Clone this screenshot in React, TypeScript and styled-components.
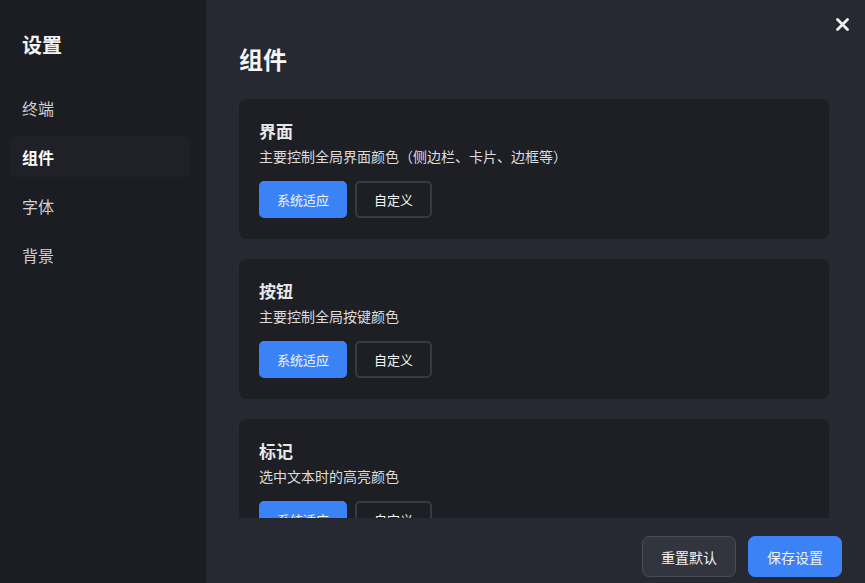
import React from "react";
import styled, { createGlobalStyle } from "styled-components";

const Global = createGlobalStyle`
  html, body { margin: 0; padding: 0; background: #262932; }
  body { font-family: "Noto Sans CJK SC", "Noto Sans", sans-serif; }
  * { box-sizing: border-box; }
`;

const Shell = styled.div`
  display: flex;
  width: 865px;
  height: 583px;
  overflow: hidden;
  position: relative;
`;

const Sidebar = styled.aside`
  width: 206px;
  flex: none;
  background: #1c1d22;
  display: flex;
  flex-direction: column;
  padding: 30px 16px 0 10px;
`;

const SideTitle = styled.h1`
  margin: 0 0 27px 12px;
  font-size: 20px;
  line-height: 30px;
  font-weight: 700;
  color: #f3f3f4;
`;

const NavList = styled.nav`
  display: flex;
  flex-direction: column;
  gap: 8px;
`;

const NavItem = styled.div<{ $active?: boolean }>`
  height: 41px;
  display: flex;
  align-items: center;
  padding-left: 12px;
  border-radius: 6px;
  font-size: 16px;
  font-weight: ${(p) => (p.$active ? 700 : 400)};
  color: ${(p) => (p.$active ? "#ffffff" : "#cfd0d4")};
  background: ${(p) => (p.$active ? "#202127" : "transparent")};
`;

const Main = styled.main`
  flex: 1;
  display: flex;
  flex-direction: column;
  background: #262932;
  min-width: 0;
`;

const Scroll = styled.div`
  flex: 1;
  overflow-y: scroll;
  padding: 39px 28px 0 33px;
  &::-webkit-scrollbar { width: 4px; }
  &::-webkit-scrollbar-track { background: #2a2d36; }
  &::-webkit-scrollbar-thumb { background: #2e313a; }
`;

const Heading = styled.h2`
  margin: 0 0 20px 0;
  font-size: 24px;
  line-height: 40px;
  font-weight: 700;
  color: #f5f5f6;
`;

const Cards = styled.div`
  display: flex;
  flex-direction: column;
  gap: 20px;
  width: 590px;
  padding-bottom: 20px;
`;

const Card = styled.section`
  background: #1e1f24;
  border-radius: 8px;
  padding: 20px;
  height: 140px;
`;

const CardTitle = styled.h3`
  margin: 0;
  font-size: 17px;
  line-height: 24px;
  font-weight: 700;
  color: #e8e8ea;
`;

const CardDesc = styled.p`
  margin: 3px 0 0 0;
  font-size: 14px;
  line-height: 20px;
  color: #dcdcdf;
`;

const BtnRow = styled.div`
  display: flex;
  gap: 8px;
  margin-top: 15px;
`;

const OptionBtn = styled.button<{ $primary?: boolean }>`
  height: 37px;
  padding: 0 ${(p) => (p.$primary ? 16 : 17)}px;
  border-radius: 5px;
  font-family: inherit;
  font-size: 13px;
  color: #f4f4f5;
  background: ${(p) => (p.$primary ? "#3b82f6" : "transparent")};
  border: 2px solid ${(p) => (p.$primary ? "#3b82f6" : "#383a42")};
  cursor: pointer;
`;

const Footer = styled.footer`
  height: 65px;
  flex: none;
  display: flex;
  justify-content: flex-end;
  gap: 12px;
  padding: 18px 23px 6px 0;
`;

const FootBtn = styled.button<{ $primary?: boolean }>`
  width: 94px;
  height: 41px;
  border-radius: 7px;
  font-family: inherit;
  font-size: 14px;
  color: #f2f2f3;
  background: ${(p) => (p.$primary ? "#3b82f6" : "#33353e")};
  border: 1px solid ${(p) => (p.$primary ? "#3b82f6" : "#4a4c55")};
  cursor: pointer;
`;

const Close = styled.button`
  position: absolute;
  top: 15px;
  right: 14px;
  width: 18px;
  height: 18px;
  padding: 0;
  border: none;
  background: transparent;
  display: flex;
  align-items: center;
  justify-content: center;
  cursor: pointer;
`;

const sections = [
  { title: "界面", desc: "主要控制全局界面颜色（侧边栏、卡片、边框等）" },
  { title: "按钮", desc: "主要控制全局按键颜色" },
  { title: "标记", desc: "选中文本时的高亮颜色" },
  { title: "链接", desc: "主要控制全局链接颜色" },
];

export default function App() {
  return (
    <>
      <Global />
      <Shell>
        <Sidebar>
          <SideTitle>设置</SideTitle>
          <NavList>
            <NavItem>终端</NavItem>
            <NavItem $active>组件</NavItem>
            <NavItem>字体</NavItem>
            <NavItem>背景</NavItem>
          </NavList>
        </Sidebar>
        <Main>
          <Scroll>
            <Heading>组件</Heading>
            <Cards>
              {sections.map((s) => (
                <Card key={s.title}>
                  <CardTitle>{s.title}</CardTitle>
                  <CardDesc>{s.desc}</CardDesc>
                  <BtnRow>
                    <OptionBtn $primary>系统适应</OptionBtn>
                    <OptionBtn>自定义</OptionBtn>
                  </BtnRow>
                </Card>
              ))}
            </Cards>
          </Scroll>
          <Footer>
            <FootBtn>重置默认</FootBtn>
            <FootBtn $primary>保存设置</FootBtn>
          </Footer>
        </Main>
        <Close aria-label="关闭">
          <svg width="13" height="13" viewBox="0 0 13 13">
            <path d="M1.5 1.5 L11.5 11.5 M11.5 1.5 L1.5 11.5" stroke="#f0f0f0" strokeWidth="2.8" strokeLinecap="round" />
          </svg>
        </Close>
      </Shell>
    </>
  );
}
